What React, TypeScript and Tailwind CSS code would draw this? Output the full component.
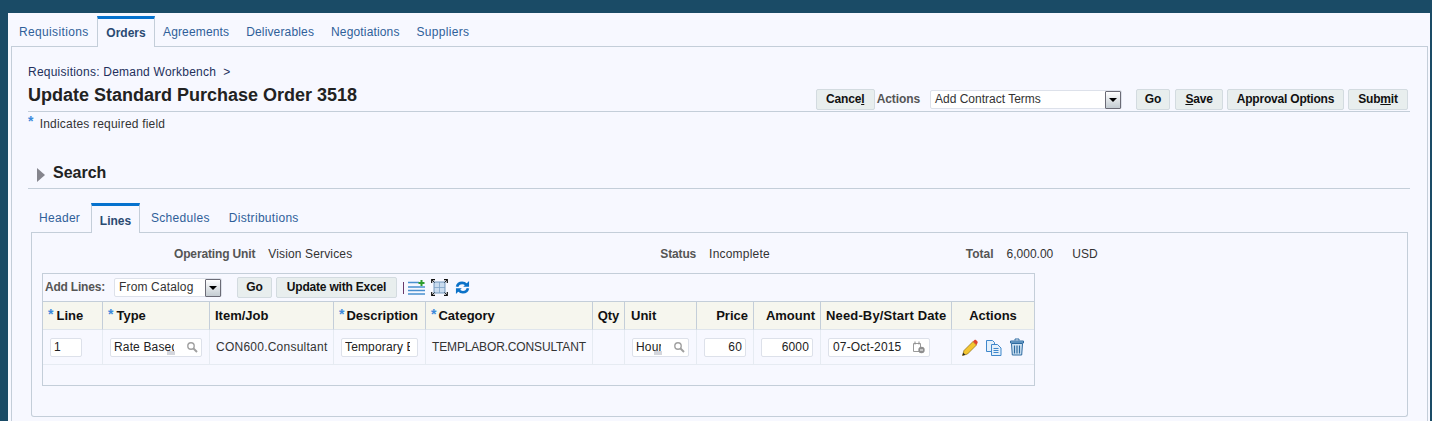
import type { ReactNode } from 'react';

function Star({ className = '' }: { className?: string }) {
  return <span className={`text-[#3d8bdc] font-bold text-[14px] leading-none ${className}`}>*</span>;
}

function Btn({ children, className = '' }: { children: ReactNode; className?: string }) {
  return (
    <div className={`h-[21px] pb-[2px] flex items-center justify-center rounded-[2px] border border-[#d3dbe0] bg-[#e8eeee] text-[12px] font-bold tracking-[-0.2px] text-[#111] ${className}`}>
      {children}
    </div>
  );
}

function SelectArrow() {
  return (
    <div className="w-[16px] h-[18px] border border-[#6b6b76] rounded-[1px] bg-gradient-to-b from-white to-[#c4ccd2] flex items-center justify-center">
      <div className="w-0 h-0 border-l-[4px] border-r-[4px] border-t-[4px] border-l-transparent border-r-transparent border-t-black" />
    </div>
  );
}

function Lov() {
  return (
    <svg width="12" height="12" viewBox="0 0 12 12" fill="none" stroke="#a0a0a0">
      <circle cx="5" cy="5" r="3.2" strokeWidth="1.4" />
      <path d="M7.5 7.5L11 11" strokeWidth="2" />
    </svg>
  );
}

// the small grey mark that sits on top of the clipped lov text
function Mark({ className = '' }: { className?: string }) {
  return <div className={`absolute top-[12px] w-[8px] h-[4px] bg-[#d4d6dc] ${className}`} />;
}

function Input({ children, className = '', right = false }: { children: ReactNode; className?: string; right?: boolean }) {
  return (
    <div className={`relative h-[19px] flex items-center rounded-[2px] border border-[#dde1ea] bg-white text-[12px] tracking-[0.15px] text-[#222] overflow-hidden whitespace-nowrap ${right ? 'justify-end pr-[3px]' : 'pl-[3px]'} ${className}`}>
      {children}
    </div>
  );
}

function Head({ children, star = false, className = '' }: { children: ReactNode; star?: boolean; className?: string }) {
  return (
    <div className={`h-[28px] bg-[#f6f6ee] border-r border-r-[#c4ced9] border-b border-b-[#dfe5ec] flex items-center text-[13px] font-bold text-[#111] whitespace-nowrap ${className}`}>
      {star && <Star className="self-start mt-[5px] mr-[2px]" />}
      {children}
    </div>
  );
}

function Cell({ children, className = '' }: { children?: ReactNode; className?: string }) {
  return (
    <div className={`h-[35px] border-r border-b border-[#e6ebf2] flex items-center text-[12px] text-[#333] whitespace-nowrap ${className}`}>
      {children}
    </div>
  );
}

export default function App() {
  return (
    <div className="w-[1432px] h-[421px] overflow-hidden bg-[#1a4b66] pt-[13px] pl-[8px] pr-[2px] font-['Liberation_Sans',Arial,sans-serif]">
      <div className="h-[408px] bg-[#f7f8ff] px-[3px] pr-[2px] flex flex-col">
        {/* main tabs */}
        <div className="h-[34px] flex items-end text-[12px] tracking-[0.15px] text-[#2f6099] shrink-0">
          <div className="w-[86px] h-[30px] flex items-center pl-[8px] tracking-[0.35px] border-b border-[#c4ced9]">Requisitions</div>
          <div className="w-[58px] h-[31px] flex items-center justify-center tracking-normal border-t-[3px] border-t-[#0572ce] border-x border-x-[#c4ced9] font-bold text-[#2a4a72]">Orders</div>
          <div className="flex-1 h-[30px] flex items-center border-b border-[#c4ced9] pl-[8px] gap-[17px]">
            <span>Agreements</span>
            <span>Deliverables</span>
            <span>Negotiations</span>
            <span className="tracking-[0.3px]">Suppliers</span>
          </div>
        </div>

        <div className="flex-1 border-x border-[#c4ced9] pl-[16px] pr-[17px]">
          <div className="pt-[18px] text-[12px] leading-[14px] tracking-[0.23px] text-[#23305c]">Requisitions: Demand Workbench&nbsp; &gt;</div>
          {/* page header */}
          <div className="h-[33px] flex items-end justify-between border-b border-[#c4ced9]">
            <div className="text-[18px] leading-[23px] font-bold text-[#222] mb-[4px]">Update Standard Purchase Order 3518</div>
            <div className="flex items-center mb-[1px] mr-[2px]">
              <Btn className="w-[59px] mr-[2px]"><span>Cance<u>l</u></span></Btn>
              <span className="pb-[2px] text-[12px] font-bold tracking-[-0.1px] text-[#555] mr-[10px]">Actions</span>
              <div className="w-[192px] h-[19px] mr-[14px] bg-white border border-[#dde1ea] rounded-[2px] flex items-center justify-between pl-[4px] text-[12px] text-[#333]">
                <span className="pb-[2px]">Add Contract Terms</span>
                <SelectArrow />
              </div>
              <Btn className="w-[34px] mr-[5px]">Go</Btn>
              <Btn className="w-[48px] mr-[4px]"><span><u>S</u>ave</span></Btn>
              <Btn className="w-[117px] mr-[4px]">Approval Options</Btn>
              <Btn className="w-[60px]"><span>Sub<u>m</u>it</span></Btn>
            </div>
          </div>
          <div className="h-[24px] flex items-center text-[12px] tracking-[0.2px] text-[#333]">
            <Star className="self-start mt-[2px] mr-[6px]" />
            Indicates required field
          </div>

          {/* search */}
          <div className="mt-[18px] h-[35px] pt-[4px] flex items-center border-b border-[#c4ced9]">
            <div className="w-0 h-0 ml-[9px] mt-[3px] border-y-[7px] border-l-[8px] border-y-transparent border-l-[#85858d]" />
            <span className="ml-[8px] text-[16px] font-bold text-[#222]">Search</span>
          </div>

          {/* sub tabs */}
          <div className="mt-[14px] ml-[3px] mr-[2px] h-[30px] flex items-end text-[12px] tracking-[0.3px] text-[#2f6099]">
            <div className="w-[60px] h-[29px] flex items-center pl-[8px] border-b border-[#c4ced9]">Header</div>
            <div className="w-[49px] h-[30px] flex items-center justify-center pt-[2px] tracking-normal border-t-[3px] border-t-[#0572ce] border-x border-x-[#c4ced9] font-bold text-[#2a4a72]">Lines</div>
            <div className="flex-1 h-[29px] flex items-center pl-[11px] gap-[19px] border-b border-[#c4ced9]">
              <span>Schedules</span>
              <span>Distributions</span>
            </div>
          </div>

          {/* lines panel */}
          <div className="ml-[3px] mr-[2px] h-[184px] border-x border-b border-[#c4ced9] rounded-b-[3px] pl-[10px]">
            <div className="h-[40px] text-[12px]">
              <div className="flex items-center pt-[14px] leading-[14px]">
                <span className="ml-[132px] font-bold tracking-[-0.15px] text-[#555]">Operating Unit</span>
                <span className="ml-[13px] tracking-[0.15px] text-[#333]">Vision Services</span>
                <span className="ml-[308px] font-bold tracking-[-0.15px] text-[#555]">Status</span>
                <span className="ml-[13px] tracking-[0.2px] text-[#333]">Incomplete</span>
                <span className="ml-[196px] font-bold text-[#555]">Total</span>
                <span className="ml-[13px] text-[#333]">6,000.00</span>
                <span className="ml-[19px] text-[#333]">USD</span>
              </div>
            </div>

            <div className="w-[993px] border border-[#c4ced9]">
              <div className="h-[28px] flex items-center pl-[2px] border-b border-[#c4ced9]">
                <span className="pb-[2px] text-[12px] font-bold tracking-[-0.2px] text-[#555] mr-[9px]">Add Lines:</span>
                <div className="w-[108px] h-[19px] bg-white border border-[#dde1ea] rounded-[2px] flex items-center justify-between pl-[4px] text-[12px] tracking-[0.15px] text-[#333] mr-[15px]">
                  <span className="pb-[2px]">From Catalog</span>
                  <SelectArrow />
                </div>
                <Btn className="w-[35px] mr-[4px]">Go</Btn>
                <Btn className="w-[121px] mr-[6px]">Update with Excel</Btn>
                <div className="w-px h-[12px] bg-[#6a3a6a] mr-[4px]" />
                <svg width="17" height="16" viewBox="0 0 17 16" className="mr-[6px]">
                  <path d="M0 2.500h11M0 7h17M0 10.500h17M0 14h17" stroke="#4a90d0" strokeWidth="1.700" fill="none" />
                  <path d="M13.500 0v6M10.500 3h6" stroke="#2e9e2e" strokeWidth="2" fill="none" />
                </svg>
                <svg width="17" height="17" viewBox="0 0 17 17" className="mr-[7px]" fill="none">
                  <rect x="3" y="3" width="11" height="11" fill="#c9dbef" stroke="#5a84b0" strokeWidth="0.800" />
                  <path d="M3 8.500h11M8.500 3v11" stroke="#7fa3c8" strokeWidth="0.800" />
                  <path d="M0.700 4V0.700H4M13 0.700h3.300V4M16.300 13v3.300H13M4 16.300H0.700V13" stroke="#111" strokeWidth="1.200" />
                  <path d="M1 1l2.500 2.500M16 1l-2.500 2.500M16 16l-2.500-2.500M1 16l2.500-2.500" stroke="#111" strokeWidth="0.900" />
                </svg>
                <svg width="15" height="15" viewBox="0 0 16 16" fill="none" stroke="#0b72c8" strokeWidth="2.800">
                  <path d="M2.200 7.200C2.800 4.400 5 3 7.600 3c1.900 0 3.200.7 4.400 2" />
                  <path d="M13.800 8.800C13.200 11.600 11 13 8.400 13c-1.900 0-3.200-.7-4.400-2" />
                  <path d="M15 1v6.200H8.800z" fill="#0b72c8" stroke="none" />
                  <path d="M1 15V8.800h6.200z" fill="#0b72c8" stroke="none" />
                </svg>
              </div>

              <div className="grid grid-cols-[60px_107px_124px_92px_167px_32px_72px_57px_67px_131px_1fr]">
                <Head star className="pl-[5px] gap-[1px]">Line</Head>
                <Head star className="pl-[5px] gap-[1px]">Type</Head>
                <Head className="pl-[5px]">Item/Job</Head>
                <Head star className="pl-[5px]">Description</Head>
                <Head star className="pl-[5px]">Category</Head>
                <Head className="justify-center">Qty</Head>
                <Head className="pl-[6px]">Unit</Head>
                <Head className="justify-end pr-[5px]">Price</Head>
                <Head className="justify-end pr-[5px]">Amount</Head>
                <Head className="pl-[5px] tracking-[0.15px]">Need-By/Start Date</Head>
                <Head className="justify-center border-r-0">Actions</Head>

                <Cell className="pl-[7px]"><Input className="w-[32px]">1</Input></Cell>
                <Cell className="pl-[7px]">
                  <Input className="w-[92px]">
                    <span className="w-[60px] overflow-hidden">Rate Based</span>
                    <span className="ml-[12px] flex"><Lov /></span>
                    <Mark className="left-[56px]" />
                  </Input>
                </Cell>
                <Cell className="pl-[6px] tracking-[0.24px]">CON600.Consultant</Cell>
                <Cell className="pl-[7px]">
                  <Input className="w-[77px]">
                    <span className="w-[65px] overflow-hidden">Temporary Bill</span>
                  </Input>
                </Cell>
                <Cell className="pl-[6px] tracking-[-0.15px]">TEMPLABOR.CONSULTANT</Cell>
                <Cell />
                <Cell className="pl-[7px]">
                  <Input className="w-[57px]">
                    <span className="w-[25px] overflow-hidden">Hours</span>
                    <span className="ml-[12px] flex"><Lov /></span>
                    <Mark className="left-[21px]" />
                  </Input>
                </Cell>
                <Cell className="pl-[7px]"><Input right className="w-[42px]">60</Input></Cell>
                <Cell className="pl-[7px]"><Input right className="w-[52px]">6000</Input></Cell>
                <Cell className="pl-[7px]">
                  <Input className="w-[102px] pl-[4px]">
                    <span>07-Oct-2015</span>
                    <svg width="13" height="14" viewBox="0 0 13 14" className="ml-[11px]">
                      <path d="M1.500 3.500h7v8h-7z" fill="none" stroke="#9a9a9a" />
                      <path d="M3 1.500v3M7 1.500v3" stroke="#8a8a8a" />
                      <circle cx="9.500" cy="10" r="3.200" fill="#8f8f8f" />
                      <path d="M8 10h3" stroke="#fff" />
                    </svg>
                  </Input>
                </Cell>
                <Cell className="pl-[10px] gap-[8px] border-r-0">
                  <svg width="16" height="17" viewBox="0 0 16 17">
                    <path d="M.5 16.500l1.500-5L11 2.500l3.500 3.500-9 9z" fill="#f4c531" stroke="#8a6a10" strokeWidth="0.700" />
                    <path d="M.5 16.500l.8-2.800 2 2z" fill="#222" />
                    <path d="M11 2.500l1.500-1.500c.5-.3 1-.3 1.500 0l1.500 1.500c.3.5.3 1 0 1.500L14.500 6z" fill="#e0452c" />
                  </svg>
                  <svg width="16" height="17" viewBox="0 0 16 17" fill="#e4f0fb" stroke="#3f87cb" strokeWidth="1">
                    <path d="M.5 1.500h6l2 2v9h-8z" />
                    <path d="M5.500 5.500h6l3.500 3.500v7.500H5.500z" />
                    <path d="M7.500 9.500h5M7.500 11.500h5M7.500 13.500h5" fill="none" />
                  </svg>
                  <svg width="14" height="18" viewBox="0 0 14 18" fill="none">
                    <path d="M5 2.500V1h4v1.500" stroke="#2d6aa0" />
                    <path d="M.5 3h13v2H.5z" fill="#8cb8dc" stroke="#2d6aa0" />
                    <path d="M1.500 5.500h11l-.8 11.500H2.300z" fill="#cfe3f3" stroke="#2d6aa0" />
                    <path d="M4.500 7.500v8M7 7.500v8M9.500 7.500v8" stroke="#2d6aa0" strokeWidth="1.200" />
                  </svg>
                </Cell>
              </div>
              <div className="h-[20px]" />
            </div>
          </div>
        </div>
      </div>
    </div>
  );
}
